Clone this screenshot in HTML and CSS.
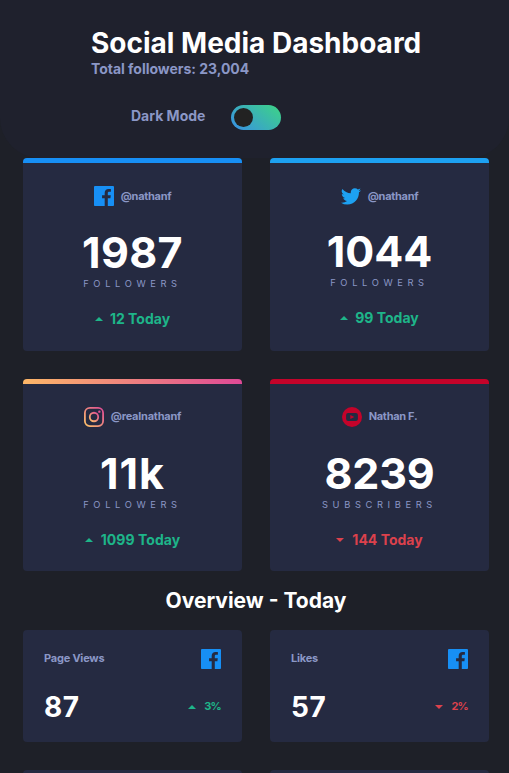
FILE: index.html
```html
<!DOCTYPE html>
<html lang="en">
<head>
<meta charset="utf-8">
<title>Social Media Dashboard</title>
<link rel="stylesheet" href="styles.css">
</head>
<body>
<svg class="defs" width="0" height="0" aria-hidden="true">
  <defs>
    <linearGradient id="ig" x1="0%" x2="100%" y1="100%" y2="0%">
      <stop offset="0%" stop-color="#fdc468"/>
      <stop offset="100%" stop-color="#df4996"/>
    </linearGradient>
    <symbol id="facebook" viewBox="0 0 20 20"><path fill="#178ff5" d="M18.896 0H1.104C.494 0 0 .494 0 1.104v17.793C0 19.506.494 20 1.104 20h9.58v-7.745H8.076V9.237h2.606V7.01c0-2.583 1.578-3.99 3.883-3.99 1.104 0 2.052.082 2.329.119v2.7h-1.598c-1.254 0-1.496.597-1.496 1.47v1.928h2.989l-.39 3.018h-2.6V20h5.098c.608 0 1.102-.494 1.102-1.104V1.104C20 .494 19.506 0 18.896 0z"/></symbol>
    <symbol id="twitter" viewBox="0 0 20 17"><path fill="#1da1f2" d="M20 2.172a8.192 8.192 0 01-2.357.646 4.11 4.11 0 001.805-2.27 8.22 8.22 0 01-2.606.996A4.096 4.096 0 0013.847.248c-2.65 0-4.596 2.472-3.998 5.037A11.648 11.648 0 011.392.998a4.109 4.109 0 001.27 5.478 4.086 4.086 0 01-1.858-.513c-.045 1.9 1.318 3.679 3.291 4.075a4.113 4.113 0 01-1.853.07 4.106 4.106 0 003.833 2.849A8.25 8.25 0 010 14.658a11.616 11.616 0 006.29 1.843c7.618 0 11.922-6.434 11.663-12.205A8.354 8.354 0 0020 2.172z"/></symbol>
    <symbol id="instagram" viewBox="0 0 20 20"><g fill="none" stroke="url(#ig)" stroke-width="1.8"><rect x=".9" y=".9" width="18.2" height="18.2" rx="5"/><circle cx="10" cy="10" r="4.23"/></g><circle cx="15.34" cy="4.66" r="1.2" fill="#e0559b"/></symbol>
    <symbol id="youtube" viewBox="0 0 20 20"><circle cx="10" cy="10" r="10" fill="#c4032a"/><rect x="4.1" y="6" width="11.8" height="8" rx="2" fill="#252a41"/><path fill="#c4032a" d="M8.3 8.1v3.8l4-1.9z"/></symbol>
    <symbol id="up" viewBox="0 0 8 4"><path fill="#1eb589" d="M0 4l4-4 4 4z"/></symbol>
    <symbol id="down" viewBox="0 0 8 4"><path fill="#dc414c" d="M0 0l4 4 4-4z"/></symbol>
  </defs>
</svg>
<header class="header">
  <div class="heading">
    <h1>Social Media Dashboard</h1>
    <p>Total followers: 23,004</p>
  </div>
  <div class="mode"><span>Dark Mode</span><div class="toggle"><i></i></div></div>
</header>
<main>
  <section class="grid">
    <article class="card facebook">
      <div class="user"><svg width="20" height="20"><use href="#facebook"/></svg><span>@nathanf</span></div>
      <div class="count">1987</div><div class="label">FOLLOWERS</div>
      <div class="today up"><svg width="8" height="4"><use href="#up"/></svg><span>12 Today</span></div>
    </article>
    <article class="card twitter">
      <div class="user"><svg width="20" height="17"><use href="#twitter"/></svg><span>@nathanf</span></div>
      <div class="count">1044</div><div class="label">FOLLOWERS</div>
      <div class="today up"><svg width="8" height="4"><use href="#up"/></svg><span>99 Today</span></div>
    </article>
    <article class="card instagram">
      <div class="user"><svg width="20" height="20"><use href="#instagram"/></svg><span>@realnathanf</span></div>
      <div class="count">11k</div><div class="label">FOLLOWERS</div>
      <div class="today up"><svg width="8" height="4"><use href="#up"/></svg><span>1099 Today</span></div>
    </article>
    <article class="card youtube">
      <div class="user"><svg width="20" height="20"><use href="#youtube"/></svg><span>Nathan F.</span></div>
      <div class="count">8239</div><div class="label">SUBSCRIBERS</div>
      <div class="today down"><svg width="8" height="4"><use href="#down"/></svg><span>144 Today</span></div>
    </article>
  </section>
  <h2>Overview - Today</h2>
  <section class="grid">
    <article class="stat">
      <div class="row"><span class="name">Page Views</span><svg width="20" height="20"><use href="#facebook"/></svg></div>
      <div class="row"><span class="value">87</span><span class="change up"><svg width="8" height="4"><use href="#up"/></svg><span>3%</span></span></div>
    </article>
    <article class="stat">
      <div class="row"><span class="name">Likes</span><svg width="20" height="20"><use href="#facebook"/></svg></div>
      <div class="row"><span class="value">57</span><span class="change down"><svg width="8" height="4"><use href="#down"/></svg><span>2%</span></span></div>
    </article>
    <article class="stat"></article>
    <article class="stat"></article>
  </section>
</main>
</body>
</html>
```
FILE: styles.css
```css
* { box-sizing: border-box; }
html { height: 100%; overflow: hidden; background: #1e2028; }
body { margin: 0; height: 773px; overflow: hidden; background: #1e2028; color: #fff; font-family: Inter, sans-serif; font-weight: 700; }
svg { display: block; flex: none; }
.defs { position: absolute; }
h1, h2, p { margin: 0; }
.header { height: 158px; padding-top: 26px; border-radius: 0 0 40px 40px; background: #1f212d; }
.heading { width: 330px; margin-left: 91px; white-space: nowrap; }
h1 { font-size: 28px; line-height: 34px; letter-spacing: 0; }
p { font-size: 14px; line-height: 17px; letter-spacing: -0.03px; color: #8b97c6; }
.mode { display: flex; align-items: center; gap: 26px; margin: 28px 0 0 131px; height: 25px; font-size: 14px; color: #8b97c6; }
.mode span { padding-bottom: 4px; }
.toggle { width: 50px; height: 25px; padding: 3px; border-radius: 13px; background: linear-gradient(40deg, #388fe6, #3dd584); }
.toggle i { display: block; width: 19px; height: 19px; border-radius: 50%; background: #222; }
main { padding: 0 20px 0 23px; }
.grid { display: grid; grid-template-columns: 219px 219px; gap: 28px; }
.card { height: 193px; padding-top: 28px; border-radius: 4px; background: linear-gradient(var(--bar), var(--bar)) top / 100% 5px no-repeat #252a41; text-align: center; }
.card.facebook { --bar: #178ff5; }
.card.twitter { --bar: #1da1f2; }
.card.instagram { height: 192px; background: linear-gradient(90deg, #fdb768, #df4996) top / 100% 5px no-repeat #252a41; }
.card.youtube { --bar: #c4032a; height: 192px; }
.user { display: flex; height: 20px; align-items: center; justify-content: center; gap: 7px; font-size: 11px; letter-spacing: -0.3px; color: #8b97c6; }
.user span { line-height: 14px; }
.instagram .user span, .youtube .user span { padding-bottom: 2px; }
.instagram .user { letter-spacing: -0.22px; }
.count { margin-top: 19px; font-size: 43px; line-height: 54px; font-kerning: none; }
.facebook .count { letter-spacing: 0.4px; }
.twitter .count { margin-top: 18px; }
.instagram .count { letter-spacing: 1px; }
.youtube .count { letter-spacing: -0.2px; }
.label { margin-top: -1px; font-size: 9.3px; line-height: 12px; letter-spacing: 4.65px; font-weight: 400; color: #8b97c6; }
.today { display: flex; align-items: center; justify-content: center; gap: 7px; margin-top: 20px; font-size: 14px; line-height: 17px; }
.instagram .today { gap: 8px; letter-spacing: 0.05px; }
.youtube .today { gap: 8px; }
.up { color: #1eb589; }
.down { color: #dc414c; }
h2 { margin: 15px 0; font-size: 21px; line-height: 29px; text-align: center; }
.stat { height: 112px; padding: 19px 21px; border-radius: 4px; background: #252a41; }
.row { display: flex; justify-content: space-between; align-items: center; }
.name { padding-bottom: 2px; font-size: 11px; letter-spacing: -0.22px; color: #8b97c6; }
.value { margin-top: 20px; font-size: 28px; line-height: 36px; letter-spacing: 0.5px; font-kerning: none; }
.change { display: flex; align-items: center; gap: 8px; margin-top: 19px; font-size: 11px; letter-spacing: -0.8px; }
.change span { padding-bottom: 1px; }
```
